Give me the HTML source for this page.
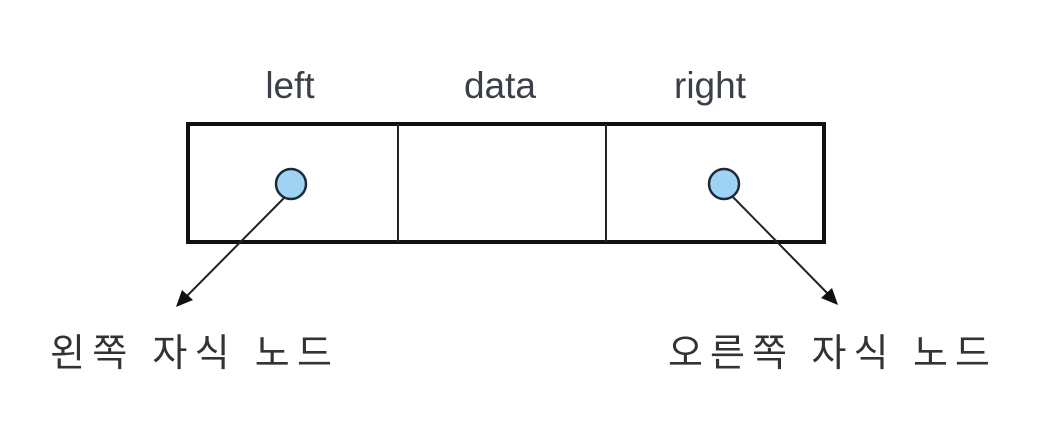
<!DOCTYPE html>
<html><head><meta charset="utf-8"><style>
html,body{margin:0;padding:0;background:#fff;}
</style></head><body>
<svg width="1037" height="417" viewBox="0 0 1037 417" xmlns="http://www.w3.org/2000/svg">
<defs><marker id="a" markerWidth="10" markerHeight="10" refX="8" refY="5" orient="auto" markerUnits="userSpaceOnUse"><path d="M0,0 L10,5 L0,10 z" fill="#111"/></marker></defs>
<g font-family="Liberation Sans, sans-serif" font-size="37" fill="#3a3f4a" text-anchor="middle">
<text x="290" y="98">left</text>
<text x="500" y="98">data</text>
<text x="710" y="98">right</text>
</g>
<rect x="188" y="124" width="636" height="118" fill="none" stroke="#111" stroke-width="4"/>
<line x1="398" y1="124" x2="398" y2="242" stroke="#222" stroke-width="2"/>
<line x1="606" y1="124" x2="606" y2="242" stroke="#222" stroke-width="2"/>
<line x1="285" y1="197" x2="180" y2="303" stroke="#222" stroke-width="2"/>
<path d="M176,307 L182,290 L193,300 z" fill="#111"/>
<line x1="732" y1="196" x2="832" y2="298" stroke="#222" stroke-width="2"/>
<path d="M838,305 L821,298 L832,288 z" fill="#111"/>
<circle cx="291" cy="184" r="15" fill="#9fd3f4" stroke="#1c2a3a" stroke-width="2.5"/>
<circle cx="724" cy="184" r="15" fill="#9fd3f4" stroke="#1c2a3a" stroke-width="2.5"/>
<g font-family="Liberation Sans, Noto Sans CJK KR, sans-serif" font-size="38" fill="#333">
<text x="50" y="366" textLength="282">왼쪽 자식 노드</text>
<text x="668" y="366" textLength="322">오른쪽 자식 노드</text>
</g>
</svg>
</body></html>
